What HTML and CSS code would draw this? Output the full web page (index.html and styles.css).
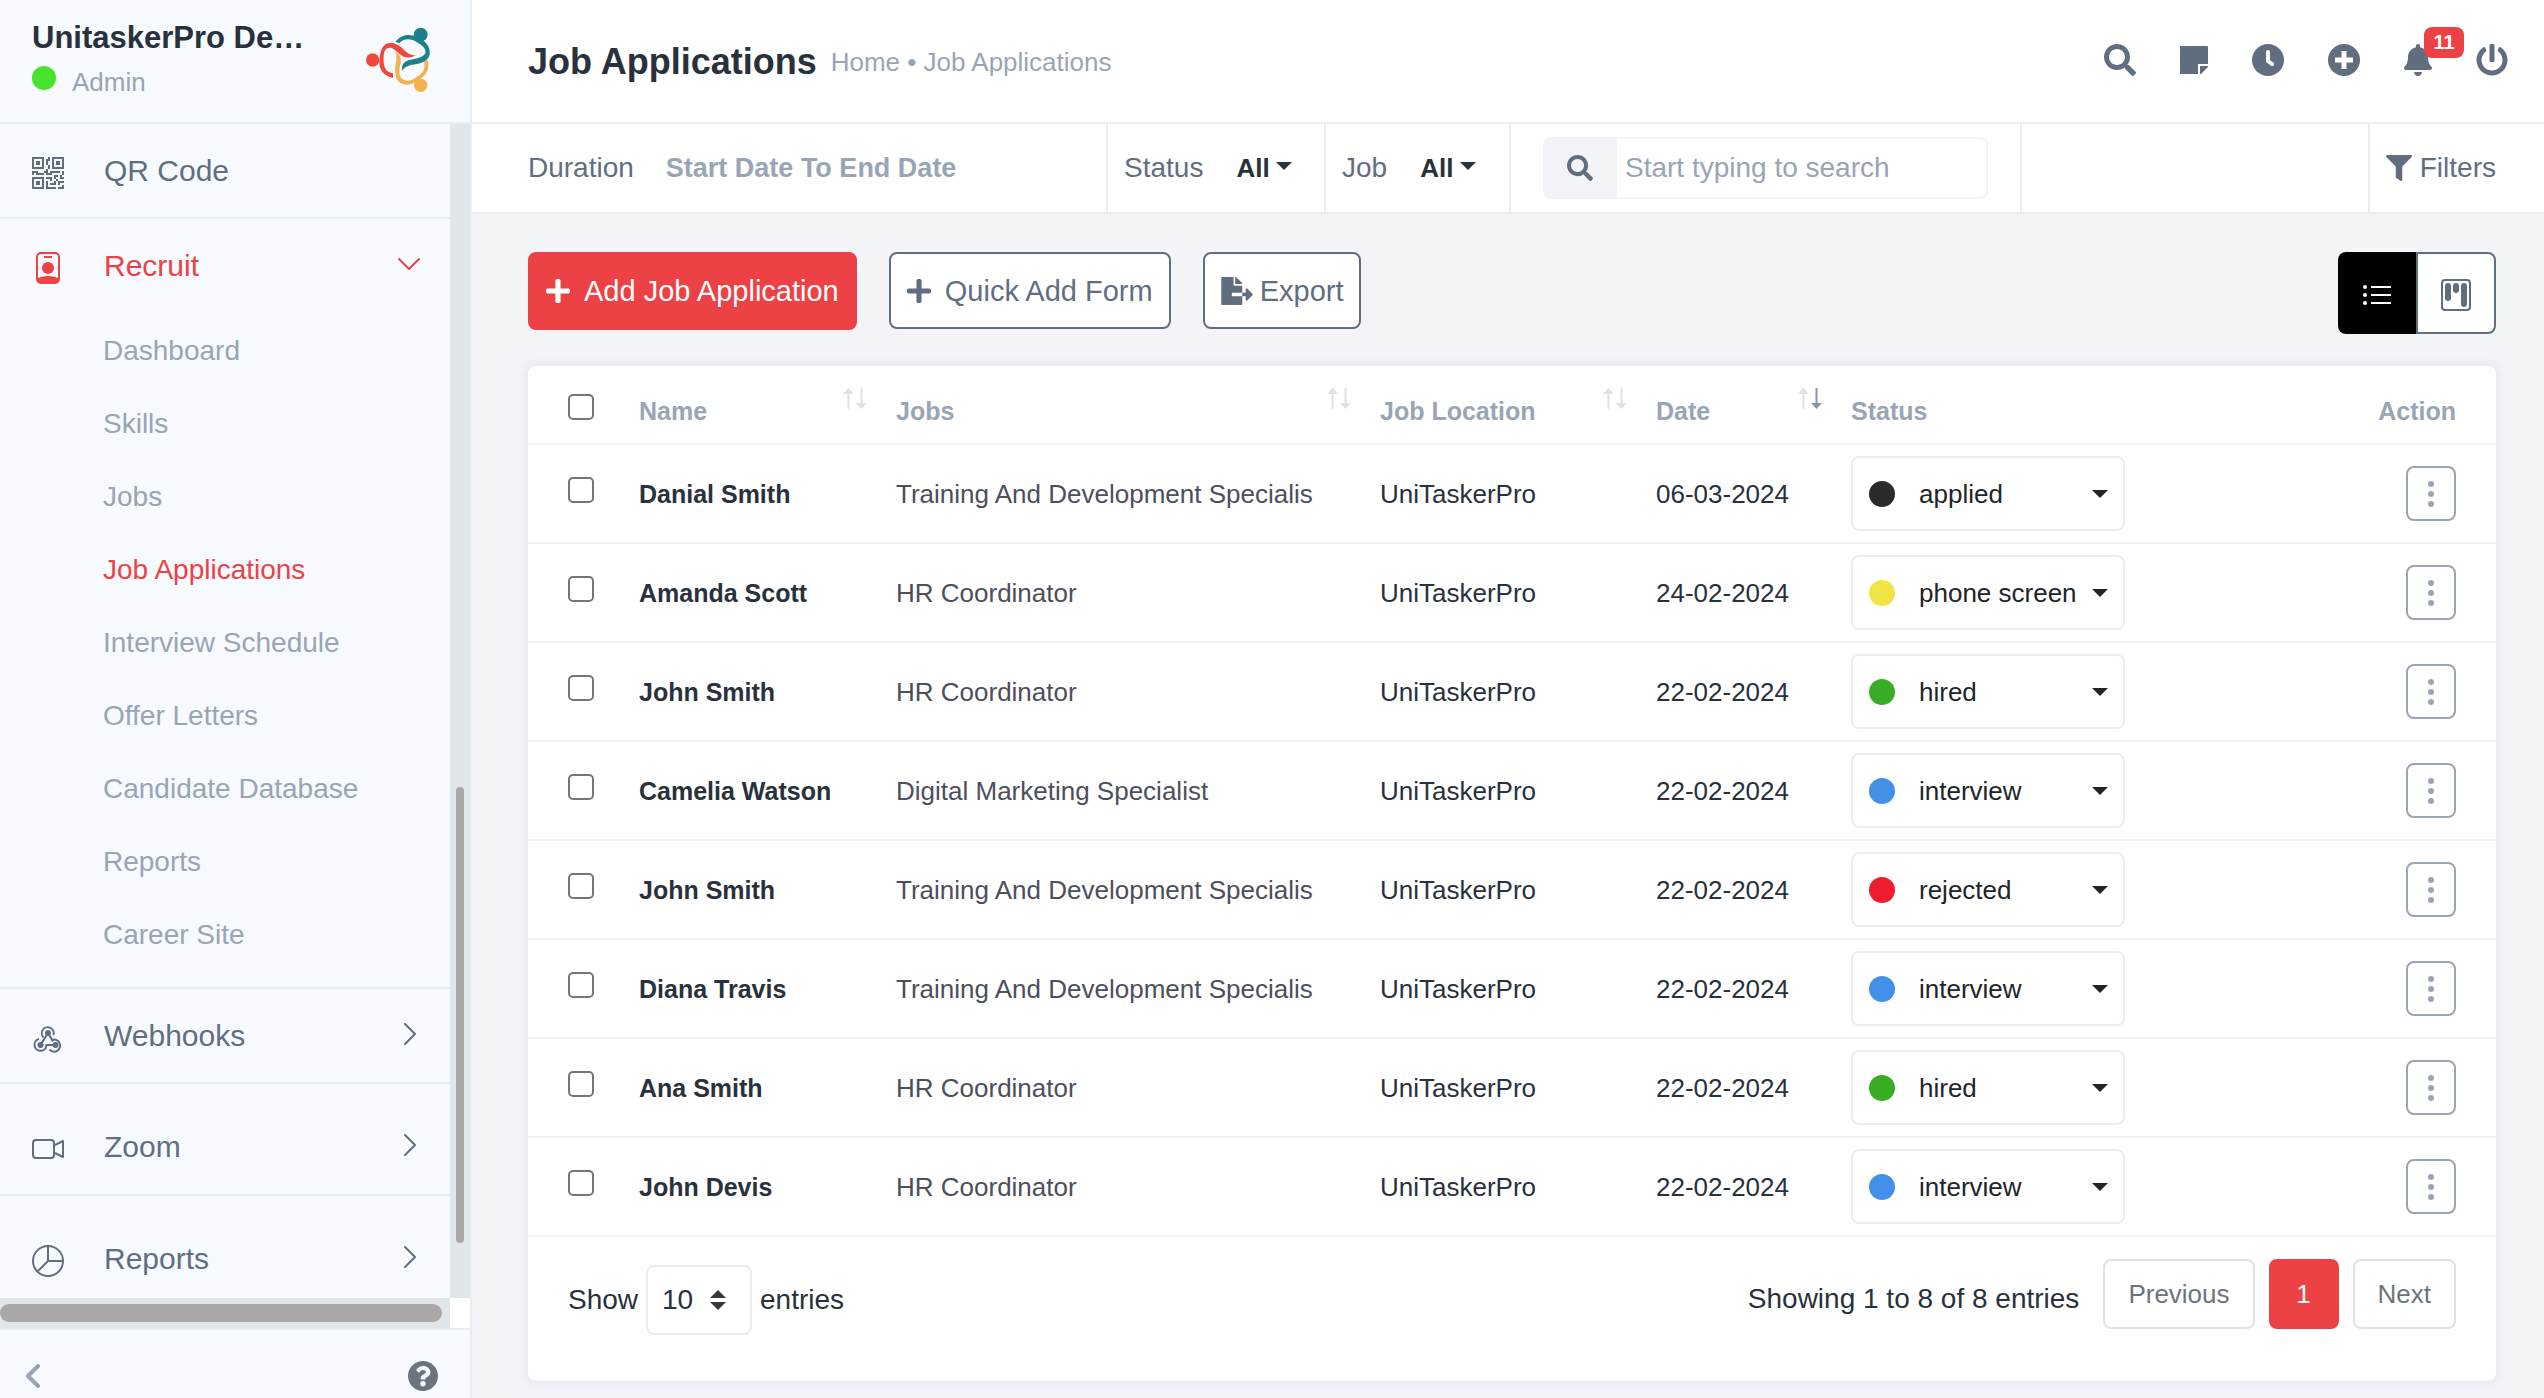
FILE: index.html
```html
<!DOCTYPE html>
<html lang="en">
<head>
<meta charset="utf-8">
<meta name="viewport" content="width=device-width, initial-scale=1">
<title>Job Applications</title>
<link rel="stylesheet" href="styles.css">
</head>
<body>
<svg class="sprite" aria-hidden="true">
  <symbol id="search" viewBox="0 0 512 512"><path d="M505 442.700L405.300 343c-4.500-4.500-10.600-7-17-7H372c27.600-35.300 44-79.700 44-128C416 93.100 322.900 0 208 0S0 93.100 0 208s93.100 208 208 208c48.300 0 92.700-16.400 128-44v16.300c0 6.400 2.500 12.500 7 17l99.700 99.700c9.400 9.400 24.600 9.400 33.900 0l28.300-28.300c9.400-9.400 9.400-24.600.1-34zM208 336c-70.700 0-128-57.200-128-128 0-70.700 57.200-128 128-128 70.700 0 128 57.200 128 128 0 70.700-57.200 128-128 128z"/></symbol>
  <symbol id="plus" viewBox="0 0 448 512"><path d="M416 208H272V64c0-17.670-14.330-32-32-32h-32c-17.670 0-32 14.330-32 32v144H32c-17.670 0-32 14.330-32 32v32c0 17.670 14.330 32 32 32h144v144c0 17.670 14.330 32 32 32h32c17.670 0 32-14.330 32-32V304h144c17.670 0 32-14.330 32-32v-32c0-17.670-14.330-32-32-32z"/></symbol>
  <symbol id="caret" viewBox="0 0 16 8"><path d="M0 0h16L8 8z"/></symbol>
  <symbol id="next" viewBox="0 0 12 22"><path d="M1 1l10 10L1 21" fill="none" stroke="currentColor" stroke-width="2" stroke-linecap="round" stroke-linejoin="round"/></symbol>
  <symbol id="sort" viewBox="0 0 24 22"><path class="up" d="M4.500 21V6H0l5.500-6L11 6H6.500v15z"/><path class="down" d="M17.500 0v15H13l5.500 6L24 15h-4.500V0z"/></symbol>
  <symbol id="dots" viewBox="0 0 6 26"><circle cx="3" cy="3" r="3"/><circle cx="3" cy="13" r="3"/><circle cx="3" cy="23" r="3"/></symbol>
</svg>

<div class="app">
  <aside class="sidebar">
    <div class="brand">
      <div>
        <p class="brand-name">UnitaskerPro De…</p>
        <p class="brand-role"><span class="online"></span>Admin</p>
      </div>
      <svg class="logo" viewBox="0 0 228 228" aria-hidden="true">
        <g fill="#f0483c"><circle cx="38" cy="114" r="20"/><path d="M99 154v14C66 160 54 138 59 107c4-34 15-46 37-44 34 4 38 38 71 37-17 10-34 9-47-3-17-15-26-24-38-18-13 6-11 26-11 41 1 19 9 31 28 34z"/></g>
        <g fill="#f2b34f"><circle cx="182" cy="190" r="20"/><path d="M107 89c17 9 18 25 13 44-5 21-1 41 19 43 15 1 24-7 37-15 16-11 20-24 16-42l11-6c7 27-3 43-22 58-18 13-33 20-50 16-24-6-29-32-24-59 2-13 4-25 0-39z"/></g>
        <g fill="#1b808b"><circle cx="182" cy="38" r="21"/><path d="M106 60c21-27 46-25 72-12 26 14 33 31 31 49-3 15-14 22-29 27-25 6-41 4-54 22-2-20 8-30 26-33 18-4 38-6 44-20 4-13-11-24-26-33-17-10-36-12-52 3z"/></g>
      </svg>
    </div>

    <div class="scroll-area">
      <nav class="menu">
        <a class="menu-item" href="#">
          <svg width="32" height="32" viewBox="0 0 16 16"><path d="M2 2h2v2H2V2ZM6 0v6H0V0h6ZM5 1H1v4h4V1ZM4 12H2v2h2v-2ZM6 10v6H0v-6h6Zm-5 1v4h4v-4H1Zm11-9h2v2h-2V2ZM10 0v6h6V0h-6Zm5 1v4h-4V1h4ZM8 1V0h1v2H8v2H7V1h1Zm0 5V4h1v2H8ZM6 8V7h1V6h1v2h1V7h5v1h-4v1H7V8H6Zm0 0v1H2V8H1v1H0V7h3v1h3Zm10 1h-1V7h1v2Zm-1 0h-1v2h2v-1h-1V9Zm-4 0h2v1h-1v1h-1V9Zm2 3v-1h-1v1h-1v1H9v1h3v-2h1Zm0 0h3v1h-2v1h-1v-2Zm-4-1v1h1v-2H7v1h2ZM7 12h1v3h4v1H7v-4Zm9 2v2h-3v-1h2v-1h1Z" fill-rule="evenodd"/></svg>
          <span>QR Code</span>
        </a>
        <div class="menu-group">
          <a class="menu-item open" href="#">
            <svg width="32" height="32" viewBox="0 0 32 32"><rect x="5" y="1" width="22" height="30" rx="4" fill="none" stroke="currentColor" stroke-width="2"/><path d="M12 4h8v2h-8z"/><circle cx="16" cy="16" r="6"/><path d="M5 27c4-4 18-4 22 0v1c0 2-1 3-3 3H8c-2 0-3-1-3-3z"/></svg>
            <span>Recruit</span>
            <svg class="arrow" width="22" height="12" viewBox="0 0 22 12"><path d="M1 1l10 10L21 1" fill="none" stroke="currentColor" stroke-width="2" stroke-linecap="round" stroke-linejoin="round"/></svg>
          </a>
          <ul class="submenu">
            <li><a href="#">Dashboard</a></li>
            <li><a href="#">Skills</a></li>
            <li><a href="#">Jobs</a></li>
            <li><a class="current" href="#">Job Applications</a></li>
            <li><a href="#">Interview Schedule</a></li>
            <li><a href="#">Offer Letters</a></li>
            <li><a href="#">Candidate Database</a></li>
            <li><a href="#">Reports</a></li>
            <li><a href="#">Career Site</a></li>
          </ul>
        </div>
        <a class="menu-item" href="#">
          <svg class="low" width="32" height="32" viewBox="0 0 32 32"><g fill="none" stroke="currentColor" stroke-width="2"><path d="M21.500 12A6 6 0 1 0 11.500 14.500"/><path d="M7 16A6 6 0 1 0 14.500 22H23"/><path d="M20 17A6 6 0 1 1 17.500 26.500"/><path d="M16 10L8.500 22M16 10l5 8.500"/></g><circle cx="16" cy="10" r="3"/><circle cx="8.500" cy="22" r="3"/><circle cx="23.500" cy="22" r="3"/></svg>
          <span>Webhooks</span>
          <svg class="arrow" width="12" height="22"><use href="#next"/></svg>
        </a>
        <a class="menu-item spaced" href="#">
          <svg width="32" height="32" viewBox="0 0 32 32"><g fill="none" stroke="currentColor" stroke-width="2" stroke-linejoin="round"><rect x="1" y="7" width="21" height="18" rx="3"/><path d="M23 12l8-4v16l-8-4"/></g></svg>
          <span>Zoom</span>
          <svg class="arrow" width="12" height="22"><use href="#next"/></svg>
        </a>
        <a class="menu-item spaced" href="#">
          <svg width="32" height="32" viewBox="0 0 32 32"><g fill="none" stroke="currentColor" stroke-width="2"><circle cx="16" cy="16" r="15"/><path d="M16 1v15h15M16 16L5.500 26.500"/></g></svg>
          <span>Reports</span>
          <svg class="arrow" width="12" height="22"><use href="#next"/></svg>
        </a>
      </nav>
      <div class="track-y"><div class="thumb-y"></div></div>
      <div class="track-x"><div class="thumb-x"></div></div>
      <div class="track-corner"></div>
    </div>

    <div class="sidebar-foot">
      <button type="button" class="plain collapse" aria-label="Collapse menu"><svg width="16" height="24" viewBox="0 0 16 24"><path d="M13 2L3 12l10 10" fill="none" stroke="currentColor" stroke-width="4" stroke-linecap="round" stroke-linejoin="round"/></svg></button>
      <button type="button" class="plain help" aria-label="Help"><svg width="30" height="30" viewBox="8 8 496 496"><path d="M504 256c0 136.997-111.043 248-248 248S8 392.997 8 256C8 119.083 119.043 8 256 8s248 111.083 248 248zM262.655 90c-54.497 0-89.255 22.957-116.549 63.758-3.536 5.286-2.353 12.415 2.715 16.258l34.699 26.310c5.205 3.947 12.621 3.008 16.665-2.122 17.864-22.658 30.113-35.797 57.303-35.797 20.429 0 45.698 13.148 45.698 32.958 0 14.976-12.363 22.667-32.534 33.976C247.128 238.528 216 254.941 216 296v4c0 6.627 5.373 12 12 12h56c6.627 0 12-5.373 12-12v-1.333c0-28.462 83.186-29.647 83.186-106.667 0-58.002-60.165-102-116.531-102zM256 338c-25.365 0-46 20.635-46 46 0 25.364 20.635 46 46 46s46-20.636 46-46c0-25.365-20.635-46-46-46z"/></svg></button>
    </div>
  </aside>

  <main class="main">
    <header class="topbar">
      <h1>Job Applications</h1>
      <p class="crumbs"><a href="#">Home</a> • Job Applications</p>
      <div class="tools">
        <button type="button" class="plain" aria-label="Search"><svg width="32" height="32"><use href="#search"/></svg></button>
        <button type="button" class="plain" aria-label="Notes"><svg width="28" height="32" viewBox="0 0 28 32"><path d="M1 2h26q1 0 1 1v17H18v10H1q-1 0-1-1V3q0-1 1-1z"/><path d="M20 22h8v1l-7 7h-1z"/></svg></button>
        <button type="button" class="plain" aria-label="Timer"><svg width="32" height="32" viewBox="0 0 32 32"><circle cx="16" cy="16" r="16"/><path d="M16 8v9l4 3" fill="none" stroke="#fff" stroke-width="4" stroke-linecap="round" stroke-linejoin="round"/></svg></button>
        <button type="button" class="plain" aria-label="Create"><svg width="32" height="32" viewBox="0 0 32 32"><circle cx="16" cy="16" r="16"/><path d="M16 7v18M7 16h18" fill="none" stroke="#fff" stroke-width="5"/></svg></button>
        <button type="button" class="plain bell" aria-label="Notifications"><svg width="28" height="32" viewBox="0 0 448 512"><path d="M224 512c35.320 0 63.970-28.650 63.970-64H160.030c0 35.350 28.650 64 63.970 64zm215.390-149.710c-19.320-20.760-55.470-51.990-55.470-154.290 0-77.700-54.480-139.900-127.940-155.160V32c0-17.670-14.320-32-31.980-32s-31.980 14.330-31.980 32v20.840C118.560 68.100 64.080 130.300 64.080 208c0 102.300-36.150 133.530-55.470 154.290-6 6.450-8.660 14.160-8.610 21.710.110 16.400 12.980 32 32.100 32h383.800c19.120 0 32-15.600 32.100-32 .050-7.550-2.610-15.270-8.610-21.710z"/></svg><span class="badge">11</span></button>
        <button type="button" class="plain" aria-label="Log out"><svg width="32" height="32" viewBox="0 0 512 512"><path d="M400 54.100c63 45 104 118.600 104 201.900 0 136.800-110.800 247.700-247.500 248C120 504.300 8.200 393 8 256.400 7.900 173.100 48.900 99.300 111.800 54.200c11.700-8.300 28-4.800 35 7.700L162.600 90c5.900 10.500 3.100 23.800-6.600 31-41.500 30.800-68 79.600-68 134.900-.1 92.300 74.500 168.100 168 168.100 91.600 0 168.600-74.200 168-169.100-.3-51.800-24.700-101.800-68.100-134-9.700-7.200-12.400-20.500-6.500-30.900l15.800-28.100c7-12.400 23.200-16.100 34.800-7.800zM296 264V24c0-13.300-10.700-24-24-24h-32c-13.300 0-24 10.700-24 24v240c0 13.300 10.700 24 24 24h32c13.300 0 24-10.700 24-24z"/></svg></button>
      </div>
    </header>

    <form class="filters">
      <div class="cell duration">
        <label for="duration">Duration</label>
        <input id="duration" type="text" placeholder="Start Date To End Date">
      </div>
      <div class="cell status">
        <label for="status">Status</label>
        <span class="pick"><select id="status"><option>All</option></select><svg width="16" height="8"><use href="#caret"/></svg></span>
      </div>
      <div class="cell job">
        <label for="job">Job</label>
        <span class="pick"><select id="job"><option>All</option></select><svg width="16" height="8"><use href="#caret"/></svg></span>
      </div>
      <div class="cell find">
        <label class="find-icon" for="find" aria-label="Search"><svg width="26" height="26"><use href="#search"/></svg></label>
        <input id="find" type="text" placeholder="Start typing to search">
      </div>
      <button type="button" class="cell more"><svg width="26" height="26" viewBox="0 0 512 512"><path d="M487.976 0H24.028C2.710 0-8.047 25.866 7.058 40.971L192 225.941V432c0 7.831 3.821 15.170 10.237 19.662l80 55.980C298.020 518.690 320 507.493 320 487.980V225.941l184.947-184.970C520.021 25.896 509.338 0 487.976 0z"/></svg>Filters</button>
    </form>

    <section class="content">
      <div class="actions">
        <button type="button" class="btn primary"><svg width="24" height="28"><use href="#plus"/></svg>Add Job Application</button>
        <button type="button" class="btn"><svg width="24" height="28"><use href="#plus"/></svg>Quick Add Form</button>
        <button type="button" class="btn export"><svg width="32" height="28" viewBox="0 0 576 512"><path d="M384 121.900c0-6.300-2.500-12.400-7-16.900L279.100 7c-4.500-4.500-10.600-7-17-7H256v128h128zM571 308l-95.700-96.400c-10.100-10.100-27.400-3-27.400 11.300V288h-64v64h64v65.200c0 14.300 17.300 21.400 27.400 11.300L571 332c6.600-6.600 6.600-17.400 0-24zm-379 28v-32c0-8.800 7.200-16 16-16h176V160H248c-13.200 0-24-10.800-24-24V0H24C10.700 0 0 10.700 0 24v464c0 13.300 10.700 24 24 24h336c13.300 0 24-10.700 24-24V352H208c-8.800 0-16-7.200-16-16z"/></svg>Export</button>
        <div class="views">
          <button type="button" class="view active" aria-label="List view"><svg width="28" height="20" viewBox="0 0 28 20"><path d="M8 1h20v2H8zM8 9h20v2H8zM8 17h20v2H8z"/><circle cx="2" cy="2" r="2"/><circle cx="2" cy="10" r="2"/><circle cx="2" cy="18" r="2"/></svg></button>
          <button type="button" class="view" aria-label="Board view"><svg width="30" height="32" viewBox="0 0 30 32"><rect x="1" y="1" width="28" height="30" rx="3" fill="none" stroke="currentColor" stroke-width="2"/><rect x="4" y="4" width="6" height="18" rx="3"/><rect x="12" y="4" width="6" height="10" rx="3"/><rect x="20" y="4" width="6" height="24" rx="3"/></svg></button>
        </div>
      </div>

      <div class="card">
        <table>
          <colgroup><col class="c-check"><col class="c-name"><col class="c-jobs"><col class="c-place"><col class="c-date"><col><col class="c-action"></colgroup>
          <thead>
            <tr>
              <th><input type="checkbox" aria-label="Select all"></th>
              <th>Name<svg class="sort"><use href="#sort"/></svg></th>
              <th>Jobs<svg class="sort"><use href="#sort"/></svg></th>
              <th>Job Location<svg class="sort"><use href="#sort"/></svg></th>
              <th>Date<svg class="sort desc"><use href="#sort"/></svg></th>
              <th>Status</th>
              <th>Action</th>
            </tr>
          </thead>
          <tbody>
            <tr><td><input type="checkbox" aria-label="Select Danial Smith"></td><td>Danial Smith</td><td>Training And Development Specialis</td><td>UniTaskerPro</td><td>06-03-2024</td><td><span class="state"><i class="dot applied"></i><select aria-label="Status"><option>applied</option></select><svg width="16" height="8"><use href="#caret"/></svg></span></td><td><button type="button" class="kebab" aria-label="Actions"><svg width="6" height="26"><use href="#dots"/></svg></button></td></tr>
            <tr><td><input type="checkbox" aria-label="Select Amanda Scott"></td><td>Amanda Scott</td><td>HR Coordinator</td><td>UniTaskerPro</td><td>24-02-2024</td><td><span class="state"><i class="dot phone"></i><select aria-label="Status"><option>phone screen</option></select><svg width="16" height="8"><use href="#caret"/></svg></span></td><td><button type="button" class="kebab" aria-label="Actions"><svg width="6" height="26"><use href="#dots"/></svg></button></td></tr>
            <tr><td><input type="checkbox" aria-label="Select John Smith"></td><td>John Smith</td><td>HR Coordinator</td><td>UniTaskerPro</td><td>22-02-2024</td><td><span class="state"><i class="dot hired"></i><select aria-label="Status"><option>hired</option></select><svg width="16" height="8"><use href="#caret"/></svg></span></td><td><button type="button" class="kebab" aria-label="Actions"><svg width="6" height="26"><use href="#dots"/></svg></button></td></tr>
            <tr><td><input type="checkbox" aria-label="Select Camelia Watson"></td><td>Camelia Watson</td><td>Digital Marketing Specialist</td><td>UniTaskerPro</td><td>22-02-2024</td><td><span class="state"><i class="dot interview"></i><select aria-label="Status"><option>interview</option></select><svg width="16" height="8"><use href="#caret"/></svg></span></td><td><button type="button" class="kebab" aria-label="Actions"><svg width="6" height="26"><use href="#dots"/></svg></button></td></tr>
            <tr><td><input type="checkbox" aria-label="Select John Smith"></td><td>John Smith</td><td>Training And Development Specialis</td><td>UniTaskerPro</td><td>22-02-2024</td><td><span class="state"><i class="dot rejected"></i><select aria-label="Status"><option>rejected</option></select><svg width="16" height="8"><use href="#caret"/></svg></span></td><td><button type="button" class="kebab" aria-label="Actions"><svg width="6" height="26"><use href="#dots"/></svg></button></td></tr>
            <tr><td><input type="checkbox" aria-label="Select Diana Travis"></td><td>Diana Travis</td><td>Training And Development Specialis</td><td>UniTaskerPro</td><td>22-02-2024</td><td><span class="state"><i class="dot interview"></i><select aria-label="Status"><option>interview</option></select><svg width="16" height="8"><use href="#caret"/></svg></span></td><td><button type="button" class="kebab" aria-label="Actions"><svg width="6" height="26"><use href="#dots"/></svg></button></td></tr>
            <tr><td><input type="checkbox" aria-label="Select Ana Smith"></td><td>Ana Smith</td><td>HR Coordinator</td><td>UniTaskerPro</td><td>22-02-2024</td><td><span class="state"><i class="dot hired"></i><select aria-label="Status"><option>hired</option></select><svg width="16" height="8"><use href="#caret"/></svg></span></td><td><button type="button" class="kebab" aria-label="Actions"><svg width="6" height="26"><use href="#dots"/></svg></button></td></tr>
            <tr><td><input type="checkbox" aria-label="Select John Devis"></td><td>John Devis</td><td>HR Coordinator</td><td>UniTaskerPro</td><td>22-02-2024</td><td><span class="state"><i class="dot interview"></i><select aria-label="Status"><option>interview</option></select><svg width="16" height="8"><use href="#caret"/></svg></span></td><td><button type="button" class="kebab" aria-label="Actions"><svg width="6" height="26"><use href="#dots"/></svg></button></td></tr>
          </tbody>
        </table>
        <div class="table-foot">
          <label class="length">Show <span class="length-pick"><select><option>10</option></select><svg width="16" height="20" viewBox="0 0 16 20"><path d="M0 8L8 0l8 8zM0 12h16l-8 8z"/></svg></span> entries</label>
          <p class="info">Showing 1 to 8 of 8 entries</p>
          <nav class="pages" aria-label="Pagination">
            <button type="button">Previous</button>
            <button type="button" class="on">1</button>
            <button type="button">Next</button>
          </nav>
        </div>
      </div>
    </section>
  </main>
</div>
</body>
</html>
```
FILE: styles.css
```css
* { box-sizing: border-box; }

body {
  margin: 0;
  background: #f2f4f8;
  color: #28313c;
  font-family: "Liberation Sans", Arial, sans-serif;
  font-size: 28px;
  line-height: 32px;
}

h1, p, ul { margin: 0; padding: 0; }
ul { list-style: none; }
a { color: inherit; text-decoration: none; }
svg { display: block; flex: none; fill: currentColor; }
button, input, select { font: inherit; color: inherit; }
.sprite { position: absolute; width: 0; height: 0; }

select {
  appearance: none;
  border: 0;
  background: none;
  margin: 0;
  padding: 0;
}

.plain {
  display: block;
  border: 0;
  background: none;
  padding: 0;
}

.app {
  display: flex;
  height: 100vh;
}

/* Sidebar */
.sidebar {
  display: flex;
  flex-direction: column;
  flex: none;
  width: 472px;
  border-right: 2px solid #e8eef3;
  background: #f7faff;
}

.brand {
  display: flex;
  justify-content: space-between;
  flex: none;
  height: 124px;
  padding: 20px 34px 0 32px;
  border-bottom: 2px solid #e8eef3;
}

.brand-name {
  font-size: 31px;
  line-height: 36px;
  font-weight: bold;
}

.brand-role {
  display: flex;
  align-items: center;
  gap: 16px;
  padding-top: 10px;
  color: #99a5b5;
  font-size: 26px;
}

.online {
  width: 24px;
  height: 24px;
  margin-bottom: 8px;
  border-radius: 50%;
  background: #46e42d;
}

.logo { width: 76px; height: 76px; margin-top: 2px; }

.scroll-area {
  display: grid;
  grid-template: minmax(0, 1fr) 30px / minmax(0, 1fr) 20px;
  flex: 1;
  min-height: 0;
}

.menu {
  overflow: hidden;
  color: #616e80;
}

.menu-item {
  display: flex;
  align-items: center;
  gap: 40px;
  height: 95px;
  padding: 0 30px 0 32px;
  border-bottom: 2px solid #e8eef3;
  font-size: 30px;
}

.menu-item svg { margin-top: 4px; }
.menu-item .arrow { margin: 0 4px 4px auto; }
.menu-item .low { margin-top: 6px; }
.menu-item.spaced { height: 112px; padding-top: 16px; }

.menu-group {
  padding-bottom: 16px;
  border-bottom: 2px solid #e8eef3;
}

.menu-item.open {
  color: #ec4245;
  border-bottom-color: transparent;
}

.menu-item.open .arrow { margin-right: 0; }

.submenu a {
  display: block;
  padding-left: 103px;
  color: #99a5b5;
  line-height: 73px;
}

.submenu a.current { color: #ec4245; }

.track-y {
  display: flex;
  flex-direction: column;
  justify-content: flex-end;
  padding: 6px 6px 55px;
  background: #e1e6ea;
}

.thumb-y {
  height: 41%;
  border-radius: 4px;
  background: #a9a7a7;
}

.track-x {
  padding: 6px 8px 6px 0;
  background: #e1e6ea;
}

.thumb-x {
  height: 18px;
  border-radius: 9px;
  background: #a9a7a7;
}

.track-corner { background: #fff; }

.sidebar-foot {
  display: flex;
  align-items: center;
  justify-content: space-between;
  flex: none;
  height: 70px;
  padding: 24px 32px 0 25px;
  border-top: 2px solid #e8eef3;
}

.collapse { color: #99a5b5; }
.help { color: #6c757d; }

/* Top bar */
.main {
  flex: 1;
  min-width: 0;
}

.topbar {
  display: flex;
  align-items: center;
  height: 124px;
  padding: 2px 36px 0 56px;
  border-bottom: 2px solid #e8eef3;
  background: #fff;
}

.topbar h1 {
  font-size: 36px;
  line-height: 40px;
}

.crumbs {
  padding-left: 14px;
  color: #99a5b5;
  font-size: 26px;
}

.tools {
  display: flex;
  gap: 44px;
  margin-left: auto;
  padding-bottom: 4px;
  color: #616e80;
}

.bell { position: relative; }

.badge {
  position: absolute;
  left: 20px;
  top: -17px;
  width: 40px;
  height: 31px;
  border-radius: 8px;
  background: #ec4245;
  color: #fff;
  font-size: 20px;
  line-height: 31px;
  font-weight: bold;
}

/* Filter bar */
.filters {
  display: flex;
  height: 90px;
  padding-left: 56px;
  border-bottom: 2px solid #e8eef3;
  background: #fff;
  color: #616e80;
}

.cell {
  display: flex;
  align-items: center;
  border: 0 solid #e8eef3;
  border-right-width: 2px;
}

.duration { width: 580px; }
.status { width: 218px; }
.job { width: 185px; }
.status, .job { padding-left: 16px; }

.duration input {
  flex: 1;
  min-width: 0;
  margin-left: 32px;
  padding: 0;
  border: 0;
  outline: 0;
  font-size: 27px;
  font-weight: bold;
}

input::placeholder { color: #99a5b5; opacity: 1; }

.pick {
  display: flex;
  align-items: center;
  gap: 6px;
  margin-left: 33px;
  color: #28313c;
  font-size: 26px;
  font-weight: bold;
}

.pick select { width: 34px; }
.pick svg { margin-bottom: 4px; }

.find { width: 511px; padding: 0 32px; }

.find-icon {
  display: flex;
  align-items: center;
  justify-content: center;
  width: 74px;
  height: 62px;
  border-radius: 8px 0 0 8px;
  background: #f2f4f8;
}

.find input {
  flex: 1;
  min-width: 0;
  height: 62px;
  padding: 0 8px;
  border: 2px solid #f2f4f8;
  border-left: 0;
  border-radius: 0 8px 8px 0;
  outline: 0;
}

.more {
  gap: 8px;
  margin-left: auto;
  padding: 0 48px 0 16px;
  border-width: 0 0 0 2px;
  background: none;
}

/* Content */
.content { padding: 38px 48px 17px 56px; }

.actions {
  display: flex;
  align-items: flex-start;
  gap: 32px;
  color: #616e80;
}

.btn {
  display: flex;
  align-items: center;
  gap: 14px;
  height: 77px;
  padding: 0 16px;
  border: 2px solid currentColor;
  border-radius: 8px;
  background: #fff;
  font-size: 29px;
}

.btn.primary {
  height: 78px;
  border-color: #ec4245;
  background: #ec4245;
  color: #fff;
}

.btn.export { gap: 7px; }

.views {
  display: flex;
  margin-left: auto;
}

.view {
  display: flex;
  align-items: center;
  justify-content: center;
  width: 80px;
  height: 82px;
  padding: 4px 0 0;
  border: 2px solid currentColor;
  border-radius: 0 8px 8px 0;
  background: #fff;
}

.view.active {
  width: 78px;
  border: 0;
  border-radius: 8px 0 0 8px;
  background: #000;
  color: #fff;
}

.card {
  margin-top: 32px;
  border-radius: 8px;
  background: #fff;
  box-shadow: 0 0 8px 2px #e0e6ee;
}

table {
  width: 100%;
  border-spacing: 0;
  table-layout: fixed;
  font-size: 26px;
}

.c-check { width: 99px; }
.c-name { width: 257px; }
.c-jobs { width: 484px; }
.c-place { width: 276px; }
.c-date { width: 195px; }
.c-action { width: 200px; }

th, td {
  height: 99px;
  padding: 0 0 0 12px;
  border-bottom: 2px solid #f0f1f3;
  text-align: left;
  vertical-align: middle;
  white-space: nowrap;
}

th {
  position: relative;
  height: 79px;
  padding: 12px 0 0 12px;
  color: #99a5b5;
  font-size: 25px;
}

th:first-child, td:first-child { padding-left: 40px; }
th:last-child, td:last-child { padding-right: 40px; text-align: right; }
td:nth-child(2) { font-size: 25px; font-weight: bold; }
td:nth-child(3) { color: #4d4f5c; }

input[type="checkbox"] {
  display: block;
  appearance: none;
  width: 26px;
  height: 26px;
  margin: 0 0 8px;
  border: 2px solid #767676;
  border-radius: 5px;
  background: #fff;
}

.sort {
  position: absolute;
  right: 17px;
  top: 22px;
  width: 24px;
  height: 22px;
  color: #dee2e8;
}

.up { fill: #dee2e8; }
.desc { color: #8895a7; }

.state {
  position: relative;
  display: flex;
  align-items: center;
  width: 274px;
  height: 75px;
}

.state select {
  width: 100%;
  height: 100%;
  padding: 0 40px 0 66px;
  border: 2px solid #e8eef3;
  border-radius: 8px;
  color: #212529;
}

.state svg {
  position: absolute;
  right: 17px;
  color: #212529;
}

.dot {
  position: absolute;
  left: 18px;
  width: 26px;
  height: 26px;
  border-radius: 50%;
}

.applied { background: #2b2b2b; }
.phone { background: #f1e545; }
.hired { background: #3aad27; }
.interview { background: #4290e8; }
.rejected { background: #ee1c2e; }

.kebab {
  display: inline-flex;
  align-items: center;
  justify-content: center;
  width: 50px;
  height: 55px;
  padding: 0;
  border: 2px solid #99a5b5;
  border-radius: 8px;
  background: #fff;
  color: #99a5b5;
  vertical-align: middle;
}

.table-foot {
  display: flex;
  align-items: center;
  padding: 22px 40px 46px;
}

.length {
  display: flex;
  align-items: center;
  gap: 8px;
  padding-top: 6px;
}

.length-pick {
  position: relative;
  display: flex;
  align-items: center;
}

.length-pick select {
  width: 106px;
  height: 70px;
  padding-left: 14px;
  border: 2px solid #e8eef3;
  border-radius: 8px;
}

.length-pick svg {
  position: absolute;
  right: 26px;
  color: #343a40;
}

.info {
  margin-left: auto;
  padding-top: 4px;
}

.pages {
  display: flex;
  align-self: flex-start;
  gap: 14px;
  margin-left: 24px;
}

.pages button {
  min-width: 70px;
  height: 70px;
  padding: 0 23px;
  border: 2px solid #dee2e8;
  border-radius: 8px;
  background: #fff;
  color: #6c757d;
  font-size: 26px;
}

.pages .on {
  border-color: #ec4245;
  background: #ec4245;
  color: #fff;
}
```
